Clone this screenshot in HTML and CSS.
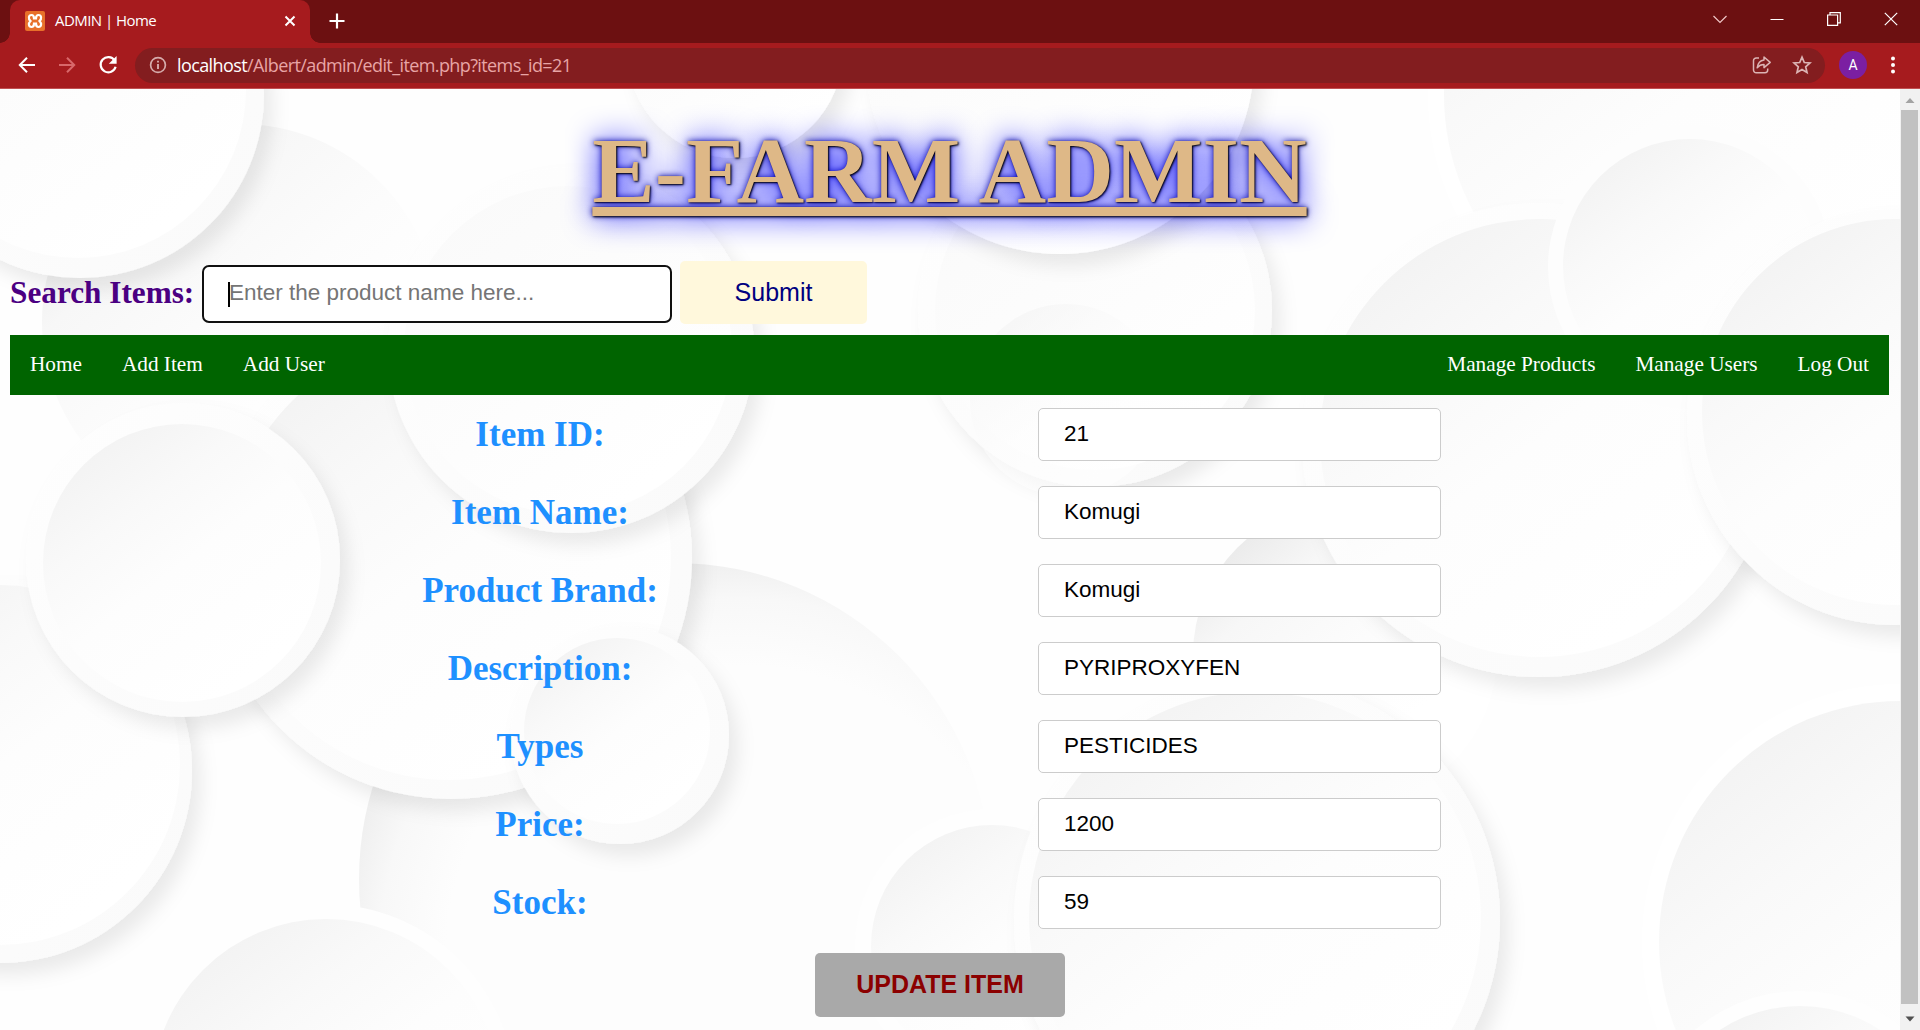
FILE: index.html
```html
<!DOCTYPE html>
<html lang="en">
<head>
<meta charset="utf-8">
<title>ADMIN | Home</title>
<link rel="stylesheet" href="styles.css">
</head>
<body>
<header class="browser">
  <div class="tabstrip">
    <div class="tab">
      <svg class="favicon" width="20" height="20" viewBox="0 0 20 20"><rect width="20" height="20" rx="2" fill="#e8702a"/><path d="M6.500 4C3.500 4 3 7.500 5.500 10C3 12.500 3.500 16 6.500 16C8.800 16 9 14.500 9 12.500H11C11 14.500 11.200 16 13.500 16C16.500 16 17 12.500 14.500 10C17 7.500 16.500 4 13.500 4C11.200 4 11 5.500 11 7.500H9C9 5.500 8.800 4 6.500 4Z" fill="none" stroke="#fff" stroke-width="2.200"/></svg>
      <span class="tab-title">ADMIN | Home</span>
      <svg class="tab-close" width="12" height="12" viewBox="0 0 12 12"><path d="M1.500 1.500L10.500 10.500M10.500 1.500L1.500 10.500" stroke="#fff" stroke-width="2"/></svg>
    </div>
    <svg class="new-tab" width="16" height="16" viewBox="0 0 16 16"><path d="M8 .5V15.500M.5 8H15.500" stroke="#fff" stroke-width="2.200"/></svg>
    <div class="window-controls">
      <svg width="14" height="14" viewBox="0 0 14 14"><path d="M.5 4L7 10.500L13.500 4" fill="none" stroke="#f0c8c8" stroke-width="1.200"/></svg>
      <svg width="14" height="14" viewBox="0 0 14 14"><path d="M.5 7.500H13.500" stroke="#fff" stroke-width="1"/></svg>
      <svg width="14" height="14" viewBox="0 0 14 14"><path d="M.6 3H10.600V13.400H.6ZM3 3V.7H13.300V10.800H10.600" fill="none" stroke="#fff" stroke-width="1.200"/></svg>
      <svg width="14" height="14" viewBox="0 0 14 14"><path d="M.8 .8L13.200 13.200M13.200 .8L.8 13.200" stroke="#fff" stroke-width="1.200"/></svg>
    </div>
  </div>
  <div class="toolbar">
    <svg width="18" height="18" viewBox="0 0 18 18"><path d="M17 9H2M9 1.800L1.800 9L9 16.200" fill="none" stroke="#fff" stroke-width="2"/></svg>
    <svg width="18" height="18" viewBox="0 0 18 18"><path d="M1 9H16M9 1.800L16.200 9L9 16.200" fill="none" stroke="#d8686a" stroke-width="2"/></svg>
    <svg width="20" height="20" viewBox="0 0 20 20"><path d="M16.600 5.500A7.600 7.600 0 1 0 17.600 11.800" fill="none" stroke="#fff" stroke-width="2.200"/><path d="M18.600 1V8.800H10.800Z" fill="#fff"/></svg>
    <div class="address">
      <svg width="18" height="18" viewBox="0 0 18 18"><circle cx="9" cy="9" r="7.400" fill="none" stroke="#d5abab" stroke-width="1.700"/><path d="M9 8V13M9 4.700V6.500" stroke="#d5abab" stroke-width="1.900"/></svg>
      <span class="url"><b>localhost</b>/Albert/admin/edit_item.php?items_id=21</span>
      <svg class="share" width="20" height="20" viewBox="0 0 20 20"><path d="M7 3H4.200A2.700 2.700 0 0 0 1.500 5.700V15A2.700 2.700 0 0 0 4.200 17.700H13A2.700 2.700 0 0 0 15.700 15V13.500" fill="none" stroke="#dcb4b4" stroke-width="1.500"/><path d="M12 2L18.200 7.400L12 12.600V9.600C9 9.600 7 10.600 5.200 12.800C5.800 8.500 8 5.600 12 5.100Z" fill="none" stroke="#dcb4b4" stroke-width="1.500" stroke-linejoin="round"/></svg>
      <svg width="20" height="20" viewBox="0 0 20 20"><path d="M10 2.200L12.300 7.500L18 8L13.700 11.800L15 17.400L10 14.400L5 17.400L6.300 11.800L2 8L7.700 7.500Z" fill="none" stroke="#dcb4b4" stroke-width="1.700"/></svg>
    </div>
    <span class="avatar">A</span>
    <svg width="6" height="18" viewBox="0 0 6 18"><g fill="#fff"><circle cx="3" cy="2.500" r="2"/><circle cx="3" cy="9" r="2"/><circle cx="3" cy="15.500" r="2"/></g></svg>
  </div>
</header>

<div class="viewport">
  <svg class="backdrop" viewBox="0 89 1900 941" width="1900" height="941">
    <defs>
      <linearGradient id="face" x1=".12" y1=".08" x2=".75" y2=".9"><stop offset="0" stop-color="#f2f2f2"/><stop offset=".3" stop-color="#f9f9f9"/><stop offset=".55" stop-color="#fdfdfd"/><stop offset="1" stop-color="#fff"/></linearGradient>
      <linearGradient id="soft" x1=".12" y1=".08" x2=".75" y2=".9"><stop offset="0" stop-color="#fafafa"/><stop offset="1" stop-color="#fff"/></linearGradient>
      <linearGradient id="deep" x1=".05" y1=".15" x2=".6" y2=".8"><stop offset="0" stop-color="#e8e8e8"/><stop offset=".3" stop-color="#f7f7f7"/><stop offset=".65" stop-color="#fcfcfc"/><stop offset="1" stop-color="#fff"/></linearGradient>
      <radialGradient id="crescent" gradientUnits="userSpaceOnUse" cx="740" cy="960" r="420"><stop offset=".7" stop-color="#fdfdfd"/><stop offset=".86" stop-color="#f8f8f8"/><stop offset="1" stop-color="#ebebeb"/></radialGradient>
      <linearGradient id="rim" x1="0" y1="0" x2="1" y2="1"><stop offset="0" stop-color="#fefefe"/><stop offset="1" stop-color="#fafafa"/></linearGradient>
      <filter id="drop" x="-20%" y="-20%" width="150%" height="150%"><feDropShadow dx="9" dy="12" stdDeviation="9" flood-color="#000" flood-opacity=".08"/></filter>
    </defs>
    <rect y="89" width="1900" height="941" fill="#fefefe"/>
    <g fill="url(#rim)">
      <circle cx="1690" cy="95" r="262" fill="#fff"/>
      <circle cx="1690" cy="95" r="246" fill="url(#face)"/>
      <circle cx="240" cy="322" r="215" fill="#fefefe"/>
      <circle cx="240" cy="322" r="198" fill="url(#deep)"/>
      <circle cx="1095" cy="310" r="177" filter="url(#drop)"/>
      <circle cx="1095" cy="310" r="160" fill="url(#soft)"/>
      <circle cx="1066" cy="400" r="96" fill="url(#face)" opacity=".6"/>
      <circle cx="1060" cy="60" r="194" fill="url(#soft)" filter="url(#drop)"/>
      <circle cx="735" cy="50" r="108" fill="url(#soft)" filter="url(#drop)"/>
      <circle cx="675" cy="879" r="332" fill="#fefefe"/>
      <circle cx="675" cy="879" r="316" fill="url(#crescent)"/>
      <circle cx="0" cy="771" r="192" filter="url(#drop)"/>
      <circle cx="0" cy="765" r="180" fill="url(#face)"/>
      <circle cx="451" cy="558" r="241" filter="url(#drop)"/>
      <circle cx="449" cy="558" r="222" fill="url(#face)"/>
      <circle cx="571" cy="350" r="183" filter="url(#drop)"/>
      <circle cx="568" cy="350" r="164" fill="url(#soft)"/>
      <circle cx="80" cy="94" r="184" filter="url(#drop)"/>
      <circle cx="78" cy="90" r="168" fill="url(#soft)"/>
      <circle cx="183" cy="560" r="157" filter="url(#drop)"/>
      <circle cx="182" cy="563" r="139" fill="url(#face)"/>
      <circle cx="620" cy="735" r="109" filter="url(#drop)"/>
      <circle cx="617" cy="731" r="93" fill="url(#face)"/>
      <circle cx="325" cy="1094" r="190" fill="#fefefe"/>
      <circle cx="326" cy="1093" r="174" fill="url(#face)"/>
      <circle cx="1345" cy="655" r="152" fill="url(#deep)"/>
      <circle cx="1539" cy="440" r="237" filter="url(#drop)"/>
      <circle cx="1539" cy="438" r="219" fill="url(#face)"/>
      <circle cx="1690" cy="267" r="142" fill="#fdfdfd"/>
      <circle cx="1690" cy="266" r="127" fill="url(#face)"/>
      <circle cx="1895" cy="417" r="208" filter="url(#drop)"/>
      <circle cx="1895" cy="412" r="193" fill="url(#face)"/>
      <circle cx="992" cy="946" r="137" fill="#fefefe"/>
      <circle cx="992" cy="946" r="121" fill="url(#face)"/>
      <circle cx="1257" cy="920" r="243" filter="url(#drop)"/>
      <circle cx="1255" cy="918" r="226" fill="url(#face)"/>
      <circle cx="1900" cy="942" r="258" fill="#fff"/>
      <circle cx="1900" cy="942" r="241" fill="url(#face)"/>
      <circle cx="1800" cy="1152" r="161" fill="#fefefe"/>
      <circle cx="1800" cy="1152" r="146" fill="url(#face)"/>
    </g>
  </svg>
  <main class="page">
    <h1 class="title">E-FARM ADMIN</h1>
    <form class="search">
      <label class="search-label" for="q">Search Items:</label>
      <div class="search-box"><span class="caret"></span><input id="q" type="text" placeholder="Enter the product name here..."></div>
      <button class="submit" type="button">Submit</button>
    </form>
    <nav class="nav">
      <a>Home</a><a>Add Item</a><a>Add User</a>
      <a class="push">Manage Products</a><a>Manage Users</a><a>Log Out</a>
    </nav>
    <form class="edit">
      <div class="row"><label>Item ID:</label><input type="text" value="21"></div>
      <div class="row"><label>Item Name:</label><input type="text" value="Komugi"></div>
      <div class="row"><label>Product Brand:</label><input type="text" value="Komugi"></div>
      <div class="row"><label>Description:</label><input type="text" value="PYRIPROXYFEN"></div>
      <div class="row"><label>Types</label><input type="text" value="PESTICIDES"></div>
      <div class="row"><label>Price:</label><input type="text" value="1200"></div>
      <div class="row"><label>Stock:</label><input type="text" value="59"></div>
      <button class="update" type="button">UPDATE ITEM</button>
    </form>
  </main>
  <div class="scrollbar">
    <svg width="20" height="21" viewBox="0 0 20 21"><path d="M5.500 14L10 9L14.500 14Z" fill="#a3a3a3"/></svg>
    <div class="thumb"></div>
    <svg width="20" height="26" viewBox="0 0 20 26"><path d="M5.500 12.500L10 17.500L14.500 12.500Z" fill="#505050"/></svg>
  </div>
</div>
</body>
</html>
```
FILE: styles.css
```css
* { box-sizing: border-box; }

body {
  margin: 0;
  width: 1920px;
  height: 1030px;
  overflow: hidden;
  display: flex;
  flex-direction: column;
  font-family: "Liberation Serif", serif;
  background: #fff;
}

svg { display: block; flex: none; }

/* Browser chrome */
.browser {
  height: 89px;
  flex: none;
  font-family: "Open Sans", sans-serif;
  color: #fff;
}

.tabstrip {
  display: flex;
  align-items: center;
  height: 43px;
  background: #6c1011;
}

.tab {
  position: relative;
  display: flex;
  align-items: center;
  width: 300px;
  height: 43px;
  margin-left: 10px;
  padding: 0 14px 2px 15px;
  border-radius: 10px 10px 0 0;
  background: #a61b1e;
}

.tab::before,
.tab::after {
  content: "";
  position: absolute;
  bottom: 0;
  width: 10px;
  height: 10px;
}

.tab::before {
  left: -10px;
  background: radial-gradient(circle at 0 0, transparent 9.5px, #a61b1e 10px);
}

.tab::after {
  right: -10px;
  background: radial-gradient(circle at 100% 0, transparent 9.5px, #a61b1e 10px);
}

.tab-title {
  margin-left: 10px;
  padding-bottom: 1px;
  font-size: 15px;
  letter-spacing: -0.55px;
  white-space: nowrap;
}

.tab-close { margin-left: auto; }
.new-tab { margin-left: 19px; margin-bottom: 1px; }

.window-controls {
  display: flex;
  gap: 43px;
  margin-left: auto;
  margin-right: 22px;
  margin-bottom: 6px;
}

.toolbar {
  display: flex;
  align-items: center;
  height: 46px;
  padding: 0 24px 1px 18px;
  background: #a61b1e;
  border-bottom: 1px solid #c05052;
}

.toolbar > svg { margin-right: 22px; }
.toolbar > svg:nth-of-type(3) { margin-right: 17px; }
.toolbar > svg:last-child { margin: 0; }

.address {
  display: flex;
  align-items: center;
  flex: 1;
  height: 35px;
  padding: 0 13px 0 14px;
  border-radius: 18px;
  background: #831d1f;
}

.url {
  margin-left: 10px;
  padding-bottom: 1px;
  font-size: 18px;
  letter-spacing: -0.6px;
  white-space: nowrap;
  color: #e8a5a6;
}

.url b { font-weight: 400; color: #fff; }
.share { margin-left: auto; margin-right: 20px; }

.avatar {
  width: 28px;
  height: 28px;
  margin: 0 23px 0 14px;
  border-radius: 50%;
  background: #7b1fa2;
  font: 14px/28px Roboto, sans-serif;
  text-align: center;
}

/* Web page */
.viewport {
  position: relative;
  display: flex;
  height: 941px;
}

.backdrop { position: absolute; left: 0; top: 0; }

.page {
  position: relative;
  flex: 1;
  padding: 0 11px 0 10px;
}

.title {
  height: 109px;
  margin: 27px 0 36px;
  font-size: 93.75px;
  line-height: 109px;
  text-align: center;
  text-decoration: underline;
  color: burlywood;
  text-shadow: 1px 1px 2px #000, 0 0 31px blue, 0 0 6px darkblue;
}

.search {
  display: flex;
  align-items: center;
  height: 63px;
}

.search-label {
  width: 192px;
  font-size: 31.25px;
  font-weight: bold;
  white-space: nowrap;
  color: indigo;
}

.search-box {
  position: relative;
  width: 470px;
  height: 58px;
  margin-top: 2px;
  border: 2px solid #101010;
  border-radius: 7px;
  background: #fff;
}

.search-box input {
  width: 100%;
  height: 54px;
  padding: 0 25px 2px;
  border: 0;
  outline: 0;
  background: none;
  font: 22.5px "Liberation Sans", sans-serif;
}

.search-box input::placeholder { color: #757575; }

.caret {
  position: absolute;
  left: 24px;
  top: 15px;
  width: 2px;
  height: 25px;
  background: #000;
}

.submit {
  width: 187px;
  height: 63px;
  margin-left: 8px;
  border: 0;
  border-radius: 5px;
  background: cornsilk;
  font: 25px "Liberation Sans", sans-serif;
  color: navy;
}

.nav {
  display: flex;
  height: 60px;
  margin-top: 11px;
  padding-bottom: 2px;
  background: #006400;
  font-size: 21.25px;
  line-height: 58px;
  color: #fff;
}

.nav a { padding: 0 20px; }
.nav .push { margin-left: auto; }

.edit {
  display: flex;
  flex-direction: column;
  width: 1398px;
  margin: 13px 0 0 181px;
}

.row {
  display: grid;
  grid-template-columns: 1fr 1fr;
  align-items: center;
  justify-items: center;
  height: 53px;
  margin-bottom: 25px;
}

.row label {
  padding-right: 1px;
  font-size: 35px;
  font-weight: bold;
  color: dodgerblue;
}

.row input {
  width: 403px;
  height: 53px;
  padding: 0 25px 2px;
  border: 1px solid #ccc;
  border-radius: 5px;
  background: #fff;
  font: 22.5px "Liberation Sans", sans-serif;
  color: #000;
}

.update {
  width: 250px;
  height: 64px;
  margin: -1px 0 0 624px;
  padding: 0 0 2px;
  border: 0;
  border-radius: 5px;
  background: #a9a9a9;
  font: bold 25px "Liberation Sans", sans-serif;
  color: darkred;
}

.scrollbar {
  position: relative;
  display: flex;
  flex-direction: column;
  width: 20px;
  background: #f1f1f1;
}

.thumb {
  flex: 1;
  margin: 0 2px 0 1px;
  background: #c1c1c1;
}
```
